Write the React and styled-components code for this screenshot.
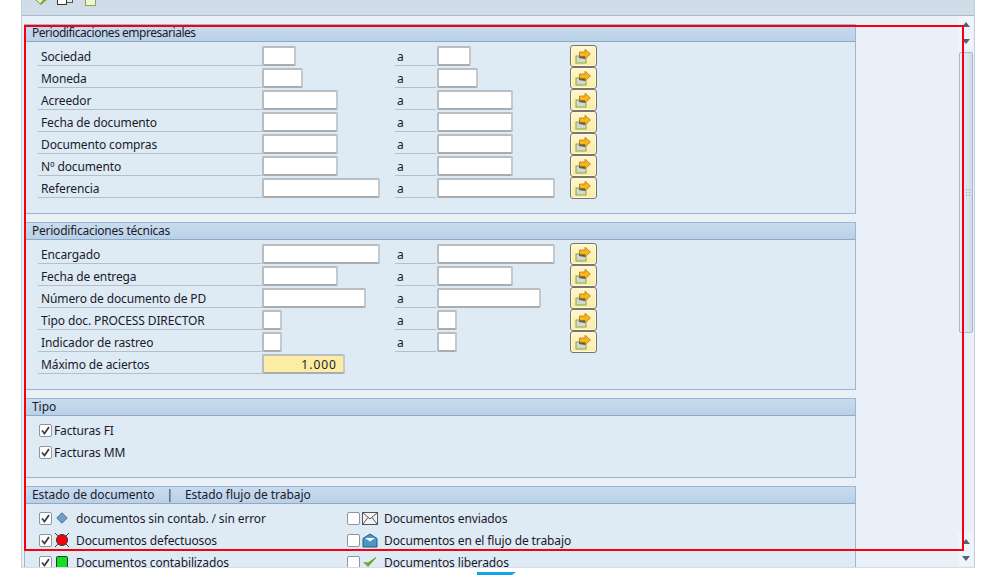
import React from "react";
import styled, { createGlobalStyle } from "styled-components";

const GlobalStyle = createGlobalStyle`
  html, body { margin: 0; padding: 0; background: #fff; overflow: hidden; }
  body {
    font-family: "Noto Sans", "Liberation Sans", Arial, sans-serif;
    font-size: 12px;
    letter-spacing: -0.12px;
    color: #1a1a2a;
  }
`;

const Page = styled.div`
  position: relative;
  width: 995px;
  height: 575px;
  overflow: hidden;
  padding-left: 21px;
  box-sizing: border-box;
`;

const Frame = styled.div`
  width: 954px;
  height: 568px;
  display: flex;
  flex-direction: column;
  background: #e9f0f7;
  border-left: 1px solid #c4d0de;
  border-right: 1px solid #c4d0de;
  border-bottom: 1px solid #d5dde8;
  box-sizing: border-box;
`;

const Toolbar = styled.div`
  height: 16px;
  flex: none;
  display: flex;
  align-items: flex-start;
  padding-left: 12px;
  background: #d0dde8;
  border-bottom: 1px solid #a9bacb;
  box-sizing: border-box;
  overflow: hidden;
`;

const ToolIcon = styled.svg`
  display: block;
  flex: none;
  margin-top: -8px;
  margin-left: ${(p) => p.$gap || 0}px;
`;

const Body = styled.div`
  flex: 1;
  min-height: 0;
  display: flex;
  overflow: hidden;
`;

const Content = styled.div`
  width: 834px;
  flex: none;
  padding: 8px 0 0 2px;
  overflow: hidden;
`;

const Panel = styled.section`
  width: 832px;
  margin-bottom: 8px;
  background: #deeaf4;
  border: 1px solid #9db5d0;
  box-sizing: border-box;
  height: ${(p) => p.$h}px;
`;

const PanelHeader = styled.div`
  height: 14px;
  padding: 0 0 2px 7px;
  display: flex;
  align-items: center;
  gap: 12px;
  background: linear-gradient(#c9dcee, #b9d0e6);
  border-bottom: 1px solid #8fa8c6;
  color: #1b1b2e;
  letter-spacing: ${(p) => p.$spacing ?? -0.05}px;
`;

const Rows = styled.div`
  padding: 4px 0 0 13px;
`;

const Row = styled.div`
  display: flex;
  height: 22px;
`;

const Label = styled.div`
  width: 221px;
  height: 19px;
  line-height: 22px;
  padding-left: 3px;
  border-bottom: 1px solid #b5bfc9;
  flex: none;
  white-space: nowrap;
`;

const InputCell = styled.div`
  width: 133px;
  flex: none;
`;

const Field = styled.div`
  width: ${(p) => p.$w}px;
  height: 20px;
  box-sizing: border-box;
  background: ${(p) => (p.$value ? "#fdeda4" : "#fff")};
  border: 2px solid;
  border-color: #b9bdc1 #c6c9cc #a9adb1 #b9bdc1;
  border-radius: 2px;
  text-align: right;
  line-height: 17px;
  padding-right: 6px;
  letter-spacing: 1px;
`;

const To = styled.div`
  width: 39px;
  height: 19px;
  line-height: 22px;
  padding-left: 2px;
  margin-right: 1px;
  border-bottom: 1px solid #b5bfc9;
  flex: none;
`;

const MoreButton = styled.button`
  width: 27px;
  height: 22px;
  padding: 0;
  margin: -1px 0 0 0;
  display: flex;
  align-items: center;
  justify-content: center;
  background: linear-gradient(#fff6cc, #fdeaa4);
  border: 1px solid #77766a;
  border-radius: 3px;
  box-shadow: inset 0 0 0 1px #fff8dc;
  box-sizing: border-box;
`;

const CheckRows = styled.div`
  padding: 3px 0 0 14px;
`;

const CheckRow = styled.div`
  display: flex;
  align-items: center;
  height: 22px;
  white-space: nowrap;
`;

const Box = styled.span`
  width: 13px;
  height: 13px;
  flex: none;
  display: flex;
  align-items: center;
  justify-content: center;
  background: #fff;
  border: 1px solid #8d96a0;
  border-radius: 2px;
  box-sizing: border-box;
  margin-right: ${(p) => p.$gap}px;
`;

const StatusGrid = styled.div`
  display: grid;
  grid-template-columns: 308px 1fr;
  padding: 3px 0 0 14px;
`;

const StatusIcon = styled.span`
  width: ${(p) => p.$w}px;
  height: 16px;
  flex: none;
  display: flex;
  align-items: center;
  justify-content: center;
  margin-right: ${(p) => p.$gap}px;
`;

const Pipe = styled.span`
  color: #22224a;
`;

const Scrollbar = styled.div`
  flex: 1;
  display: flex;
  flex-direction: column;
  align-items: flex-end;
  padding-right: 1px;
`;

const ArrowButton = styled.div`
  width: 15px;
  height: 16px;
  flex: none;
  margin-bottom: 1px;
  background: #f0f5fa;
  display: flex;
  align-items: center;
  justify-content: center;
  &::before {
    content: "";
    width: 0;
    height: 0;
    border-left: 4px solid transparent;
    border-right: 4px solid transparent;
    ${(p) => (p.$up ? "border-bottom: 5px solid #4f6478;" : "border-top: 5px solid #4f6478;")}
  }
`;

const Thumb = styled.div`
  width: 14px;
  height: 281px;
  flex: none;
  margin: 2px 0 0;
  background: linear-gradient(90deg, #eaf1f7, #cfdde9);
  border: 1px solid #aab8c6;
  border-radius: 2px;
  box-sizing: border-box;
  display: flex;
  align-items: center;
  justify-content: center;
`;

const Grip = styled.div`
  width: 6px;
  height: 9px;
  margin-left: 3px;
  background-image: radial-gradient(#8ea1b3 1px, transparent 1px);
  background-size: 3px 3px;
`;

const ScrollFill = styled.div`
  flex: 1;
`;

const Highlight = styled.div`
  position: absolute;
  left: 24px;
  top: 25px;
  width: 940px;
  height: 526px;
  border: 2px solid #f5000f;
  box-sizing: border-box;
  pointer-events: none;
`;

const TaskbarTab = styled.div`
  position: absolute;
  left: 477px;
  top: 572px;
  width: 39px;
  height: 3px;
  background: #0ea5e6;
  clip-path: polygon(0 0, 100% 0, 90% 100%, 0 100%);
`;

const MoreIcon = () => (
  <svg width="17" height="17" viewBox="0 0 17 17">
    <rect x="1" y="8" width="10" height="7" fill="#d6d6d6" stroke="#7fb12a" />
    <path d="M4 10V6h6v5z" fill="#5d5d5d" />
    <path d="M4.5 8.5V4h5.5V1.2L15.5 6 10 10.8V8.5z" fill="#fdb515" stroke="#8a6a1a" strokeWidth="0.6" />
  </svg>
);

const Check = () => (
  <svg width="9" height="9" viewBox="0 0 9 9">
    <path d="M1 4.5 3.5 7.5 8 1" fill="none" stroke="#3a3f46" strokeWidth="1.8" />
  </svg>
);

const DiamondIcon = () => (
  <svg width="12" height="12" viewBox="0 0 12 12">
    <path d="M6 .8 11.2 6 6 11.2.8 6z" fill="#6f9fc8" stroke="#3f6f9c" />
  </svg>
);

const ErrorIcon = () => (
  <svg width="14" height="14" viewBox="0 0 14 14">
    <path d="M0 0 3 3M14 0 11 3M0 14 3 11M14 14 11 11" stroke="#333" />
    <circle cx="7" cy="7" r="5.5" fill="#f5000f" stroke="#333" />
  </svg>
);

const PostedIcon = () => (
  <svg width="12" height="13" viewBox="0 0 12 13">
    <rect x=".5" y=".5" width="11" height="12" rx="1" fill="#10e020" stroke="#333" />
  </svg>
);

const MailIcon = () => (
  <svg width="16" height="13" viewBox="0 0 16 13">
    <rect x=".5" y=".5" width="15" height="12" fill="#f4f4f4" stroke="#555" />
    <path d="M.5.5 8 7l7.5-6.5M.5 12.5 6 5.5M15.5 12.5 10 5.5" fill="none" stroke="#555" />
  </svg>
);

const OpenMailIcon = () => (
  <svg width="16" height="15" viewBox="0 0 16 15">
    <path d="M1 5.5 8 1l7 4.5V14H1z" fill="#4a97c6" stroke="#1f5f88" />
    <path d="M3 5h10L8 8.5z" fill="#fff" />
  </svg>
);

const ReleasedIcon = () => (
  <svg width="14" height="12" viewBox="0 0 14 12">
    <path d="M1 6.5 5 10.5 13 1.5 5 7z" fill="#6fa82e" stroke="#6fa82e" />
  </svg>
);

const companyRows = [
  ["Sociedad", 34],
  ["Moneda", 41],
  ["Acreedor", 76],
  ["Fecha de documento", 76],
  ["Documento compras", 76],
  ["Nº documento", 76],
  ["Referencia", 118],
];

const technicalRows = [
  ["Encargado", 118],
  ["Fecha de entrega", 76],
  ["Número de documento de PD", 104],
  ["Tipo doc. PROCESS DIRECTOR", 20],
  ["Indicador de rastreo", 20],
];

const statusRows = [
  ["documentos sin contab. / sin error", <DiamondIcon />, "Documentos enviados", <MailIcon />],
  ["Documentos defectuosos", <ErrorIcon />, "Documentos en el flujo de trabajo", <OpenMailIcon />],
  ["Documentos contabilizados", <PostedIcon />, "Documentos liberados", <ReleasedIcon />],
];

const RangeRow = ({ label, width }) => (
  <Row>
    <Label>{label}</Label>
    <InputCell>
      <Field $w={width} />
    </InputCell>
    <To>a</To>
    <InputCell>
      <Field $w={width} />
    </InputCell>
    <MoreButton>
      <MoreIcon />
    </MoreButton>
  </Row>
);

export default function App() {
  return (
    <Page>
      <GlobalStyle />
      <Frame>
        <Toolbar>
          <ToolIcon width="14" height="14" viewBox="0 0 14 14">
            <path d="M7 1 14 7 7 13 0 7z" fill="#7fae3a" />
            <path d="M3 7 6 10 11 4" fill="none" stroke="#fff" strokeWidth="1.5" />
          </ToolIcon>
          <ToolIcon $gap={9} width="16" height="14" viewBox="0 0 16 14">
            <rect x="7.5" y="1.5" width="8" height="9" fill="#e6e6e6" stroke="#555" />
            <rect x=".5" y="3.5" width="9" height="9" fill="#fff" stroke="#333" />
          </ToolIcon>
          <ToolIcon $gap={12} width="11" height="14" viewBox="0 0 11 14">
            <rect x=".5" y=".5" width="10" height="13" fill="#f2f2da" stroke="#86ab3e" />
          </ToolIcon>
        </Toolbar>
        <Body>
          <Content>
            <Panel $h={190}>
              <PanelHeader $spacing={-0.48}>Periodificaciones empresariales</PanelHeader>
              <Rows>
                {companyRows.map(([label, width]) => (
                  <RangeRow key={label} label={label} width={width} />
                ))}
              </Rows>
            </Panel>
            <Panel $h={168}>
              <PanelHeader $spacing={-0.24}>Periodificaciones técnicas</PanelHeader>
              <Rows>
                {technicalRows.map(([label, width]) => (
                  <RangeRow key={label} label={label} width={width} />
                ))}
                <Row>
                  <Label>Máximo de aciertos</Label>
                  <Field $w={83} $value>1.000</Field>
                </Row>
              </Rows>
            </Panel>
            <Panel $h={80}>
              <PanelHeader>Tipo</PanelHeader>
              <CheckRows>
                <CheckRow><Box $gap={2}><Check /></Box>Facturas FI</CheckRow>
                <CheckRow><Box $gap={2}><Check /></Box>Facturas MM</CheckRow>
              </CheckRows>
            </Panel>
            <Panel $h={100}>
              <PanelHeader>
                <span>Estado de documento</span>
                <Pipe>|</Pipe>
                <span>Estado flujo de trabajo</span>
              </PanelHeader>
              <StatusGrid>
                {statusRows.map(([left, leftIcon, right, rightIcon]) => (
                  <React.Fragment key={left}>
                    <CheckRow>
                      <Box $gap={3}><Check /></Box>
                      <StatusIcon $w={14} $gap={7}>{leftIcon}</StatusIcon>
                      {left}
                    </CheckRow>
                    <CheckRow>
                      <Box $gap={2} />
                      <StatusIcon $w={16} $gap={6}>{rightIcon}</StatusIcon>
                      {right}
                    </CheckRow>
                  </React.Fragment>
                ))}
              </StatusGrid>
            </Panel>
          </Content>
          <Scrollbar>
            <ArrowButton $up />
            <ArrowButton />
            <Thumb><Grip /></Thumb>
            <ScrollFill />
            <ArrowButton $up />
            <ArrowButton />
          </Scrollbar>
        </Body>
      </Frame>
      <Highlight />
      <TaskbarTab />
    </Page>
  );
}
